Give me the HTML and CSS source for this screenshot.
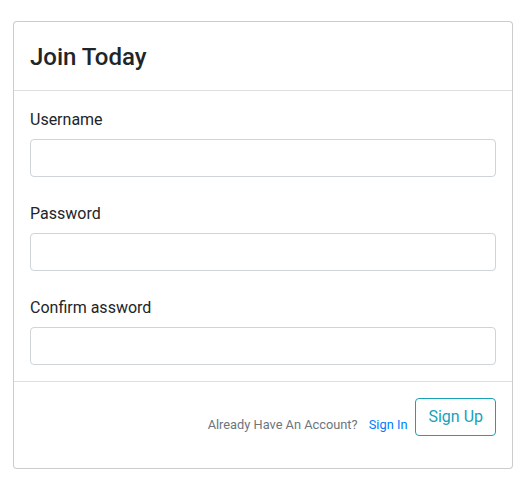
FILE: index.html
```html
<!DOCTYPE html>
<html>
<head>
<meta charset="utf-8">
<link rel="stylesheet" href="styles.css">
</head>
<body>
<div class="card">
  <div class="card-header"><h2 class="title">Join Today</h2></div>
  <div class="card-body">
    <div class="group">
      <label class="label">Username</label>
      <input class="input" type="text">
    </div>
    <div class="group">
      <label class="label">Password</label>
      <input class="input" type="password">
    </div>
    <div class="group last">
      <label class="label">Confirm assword</label>
      <input class="input" type="password">
    </div>
  </div>
  <div class="card-footer">
    <small class="muted">Already Have An Account? <a class="link" href="#">Sign In</a></small>
    <button class="btn">Sign Up</button>
  </div>
</div>
</body>
</html>
```
FILE: styles.css
```css
* { box-sizing: border-box; }
body {
  margin: 0;
  padding: 21px 10px 0 13px;
  font-family: Roboto, "Liberation Sans", sans-serif;
  color: #212529;
  background: #fff;
}
.card {
  width: 500px;
  border: 1px solid rgba(0,0,0,0.2);
  border-radius: 4px;
  background: #fff;
}
.card-header {
  padding: 21px 16px 19px;
  border-bottom: 1px solid rgba(0,0,0,0.125);
}
.title {
  margin: 0;
  font-size: 24px;
  font-weight: 500;
  line-height: 28px;
}
.card-body {
  padding: 16px 16px 0;
}
.group {
  margin-bottom: 24px;
}
.group.last {
  margin-bottom: 16px;
}
.label {
  display: block;
  font-size: 16px;
  line-height: 24px;
  padding-top: 1px;
  margin-bottom: 7px;
}
.input {
  display: block;
  width: 100%;
  height: 38px;
  border: 1px solid #ced4da;
  border-radius: 4px;
  background: #fff;
  font-size: 16px;
  padding: 6px 12px;
  font-family: inherit;
}
.card-footer {
  border-top: 1px solid rgba(0,0,0,0.125);
  padding: 16px 16px 32px;
  display: flex;
  justify-content: flex-end;
  align-items: flex-end;
  gap: 8px;
}
.muted {
  color: #6c757d;
  font-size: 12.8px;
  line-height: 19.2px;
  margin-bottom: 2px;
}
.link {
  color: #007bff;
  text-decoration: none;
  margin-left: 8px;
}
.btn {
  font-family: inherit;
  font-size: 16px;
  line-height: 24px;
  padding: 6px 12px;
  color: #17a2b8;
  background: transparent;
  border: 1px solid #17a2b8;
  border-radius: 4px;
}
```
